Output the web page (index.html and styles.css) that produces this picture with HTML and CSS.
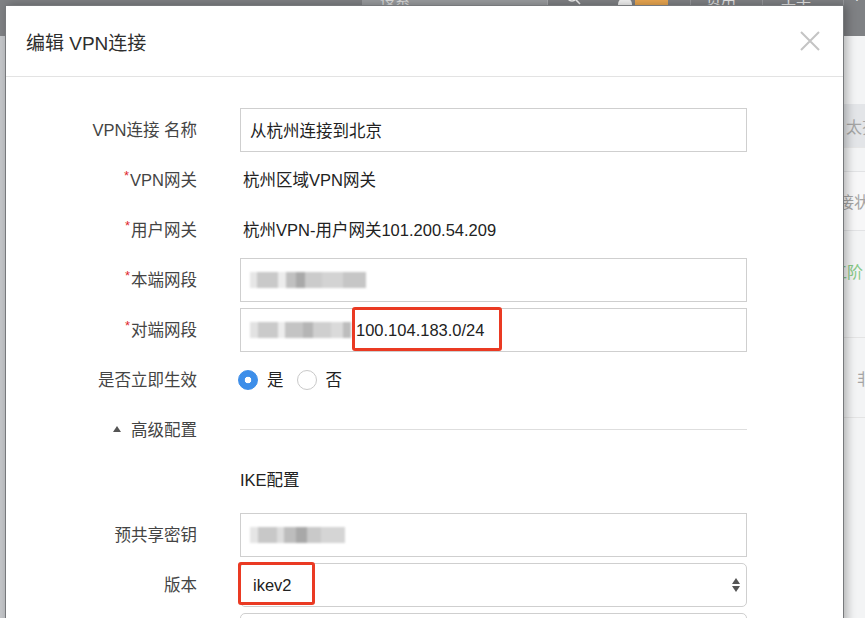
FILE: index.html
```html
<!DOCTYPE html>
<html lang="zh-CN">
<head>
<meta charset="utf-8">
<title>编辑 VPN连接</title>
<link rel="stylesheet" href="styles.css">
</head>
<body>
<div class="page">
  <div class="topbar">
    <div class="search"><span class="search-text">搜索</span></div>
    <div class="tb-icon">
      <svg width="16" height="16" viewBox="0 0 16 16"><circle cx="7" cy="7" r="5" fill="none" stroke="#eee" stroke-width="1.6"/><path d="M11 11l4 4" stroke="#eee" stroke-width="1.6"/></svg>
    </div>
    <div class="tb-user">
      <svg width="14" height="16" viewBox="0 0 14 16"><circle cx="7" cy="4" r="3.5" fill="#f2f2f2"/><path d="M0 16c0-5 3-7 7-7s7 2 7 7z" fill="#f2f2f2"/></svg>
      <span class="badge">32</span>
    </div>
    <div class="tb-link tb-sep">资用</div>
    <div class="tb-link tb-sep">工单</div>
    <div class="tb-link tb-sep tb-last">F</div>
  </div>
  <div class="layout">
    <div class="sidebar"></div>
    <div class="main">
      <div class="bg-row bg-head"><span class="bg-cell">太芬</span></div>
      <div class="bg-row bg-sub"><span class="bg-cell">接状</span></div>
      <div class="bg-row bg-item"><span class="bg-cell green">工阶</span></div>
      <div class="bg-row bg-item2"><span class="bg-cell">非</span></div>
    </div>
  </div>
</div>

<div class="modal">
  <div class="modal-header">
    <div class="modal-title">编辑 VPN连接</div>
    <svg class="close" width="20" height="20" viewBox="0 0 20 20"><path d="M1 1L19 19M19 1L1 19" stroke="#c4c4c4" stroke-width="2"/></svg>
  </div>
  <div class="form">
    <div class="row">
      <div class="label">VPN连接 名称</div>
      <div class="control"><div class="input">从杭州连接到北京</div></div>
    </div>
    <div class="row">
      <div class="label"><span class="req">*</span>VPN网关</div>
      <div class="control"><div class="value">杭州区域VPN网关</div></div>
    </div>
    <div class="row">
      <div class="label"><span class="req">*</span>用户网关</div>
      <div class="control"><div class="value">杭州VPN-用户网关101.200.54.209</div></div>
    </div>
    <div class="row">
      <div class="label"><span class="req">*</span>本端网段</div>
      <div class="control"><div class="input"><span class="blur blur-a"></span></div></div>
    </div>
    <div class="row">
      <div class="label"><span class="req">*</span>对端网段</div>
      <div class="control">
        <div class="input"><span class="blur blur-b"></span><span class="ip">100.104.183.0/24</span></div>
        <div class="mark mark-ip"></div>
      </div>
    </div>
    <div class="row">
      <div class="label">是否立即生效</div>
      <div class="control radios">
        <span class="radio checked"></span><span class="radio-text">是</span>
        <span class="radio"></span><span class="radio-text">否</span>
      </div>
    </div>
    <div class="row">
      <div class="label"><span class="caret"></span>高级配置</div>
      <div class="control"><div class="divider"></div></div>
    </div>
    <div class="row">
      <div class="label"></div>
      <div class="control"><div class="section">IKE配置</div></div>
    </div>
    <div class="row row-gap">
      <div class="label">预共享密钥</div>
      <div class="control"><div class="input"><span class="blur blur-c"></span></div></div>
    </div>
    <div class="row">
      <div class="label">版本</div>
      <div class="control">
        <div class="select"><span>ikev2</span>
          <svg width="8" height="14" viewBox="0 0 8 14"><path d="M4 0L8 6H0z" fill="#555"/><path d="M0 8H8L4 14z" fill="#555"/></svg>
        </div>
        <div class="mark mark-ver"></div>
      </div>
    </div>
    <div class="row">
      <div class="label"></div>
      <div class="control"><div class="select"></div></div>
    </div>
  </div>
</div>
</body>
</html>
```
FILE: styles.css
```css
* { box-sizing: border-box; }
html, body { margin: 0; padding: 0; }
body {
  width: 865px;
  height: 618px;
  overflow: hidden;
  position: relative;
  background: #f3f4f5;
  font-family: "Liberation Sans", "Noto Sans CJK SC", sans-serif;
  color: #333;
}

/* ---------- page behind the dialog ---------- */
.page { height: 618px; display: flex; flex-direction: column; }
.topbar {
  height: 36px;
  flex: none;
  background: #7f8184;
  display: flex;
  align-items: stretch;
}
.topbar > * { flex: none; }
.search {
  margin-left: 362px;
  width: 186px;
  background: #9a9c9f;
  border-right: 1px solid #a9abae;
  display: flex;
  align-items: flex-start;
}
.search-text {
  margin-top: -13px;
  padding-left: 18px;
  font-size: 15px;
  color: #dcdcdc;
}
.tb-icon { margin-left: 17px; margin-top: -11px; }
.tb-user { margin-left: 37px; margin-top: -11px; display: flex; align-items: flex-start; gap: 3px; }
.badge {
  background: #e9a650;
  color: #fff;
  font-size: 14px;
  width: 33px;
  text-align: center;
  height: 16px;
  line-height: 10px;
}
.tb-link {
  margin-left: 22px;
  padding-left: 15px;
  width: 72px;
  color: #e4e4e4;
  font-size: 15px;
  margin-top: -13px;
}
.tb-link + .tb-link { margin-left: 0; padding-left: 18px; width: 81px; }
.tb-link.tb-last { padding-left: 11px; width: 30px; }
.tb-sep { border-left: 1px solid #96989b; }

.layout { flex: 1; display: flex; }
.sidebar { width: 200px; background: #c4c6c9; flex: none; }
.main { flex: 1; padding-top: 68px; display: flex; flex-direction: column; }
.bg-row { display: flex; align-items: center; }
.bg-cell { margin-left: 647px; font-size: 16px; color: #a5a5a5; white-space: nowrap; }
.bg-head { height: 44px; background: #e3e5e8; border-bottom: 1px solid #e6e6e6; margin-bottom: 23px; }
.bg-head .bg-cell { margin-left: 646px; }
.bg-sub { height: 60px; background: #f7f7f8; border-top: 1px solid #e2e3e5; border-bottom: 1px solid #e2e3e5; }
.bg-sub .bg-cell { margin-left: 638px; }
.bg-item { height: 107px; align-items: flex-start; padding-top: 28px; border-bottom: 1px solid #e4e4e4; }
.bg-item .bg-cell { margin-left: 631px; }
.green { color: #86c987; }
.bg-item2 { height: 80px; border-bottom: 1px solid #e4e4e4; }
.bg-item2 .bg-cell { margin-left: 657px; }

/* ---------- dialog ---------- */
.modal {
  position: absolute;
  left: 5px;
  top: 5px;
  width: 839px;
  height: 700px;
  background: #fff;
  border: 1px solid #77797c;
  box-shadow: 3px 0 9px rgba(0, 0, 0, 0.28);
}
.modal-header {
  height: 71px;
  border-bottom: 1px solid #e3e3e3;
  display: flex;
  align-items: center;
  justify-content: space-between;
  padding: 0 23px 0 20px;
}
.modal-title { font-size: 19px; color: #2e2e2e; }
.close { display: block; }

.form { padding-top: 31px; display: flex; flex-direction: column; gap: 6px; }
.row { display: flex; align-items: center; height: 44px; }
.row-gap { margin-top: 5px; }
.label {
  width: 191px;
  flex: none;
  text-align: right;
  font-size: 16.5px;
  color: #444;
  display: flex;
  justify-content: flex-end;
  align-items: center;
  padding-bottom: 3px;
}
.req { color: #e0262b; font-size: 13px; align-self: flex-start; margin-top: 1px; margin-right: 1px; }
.control { margin-left: 43px; width: 507px; position: relative; font-size: 16.5px; }
.value { padding-left: 3px; color: #222; padding-bottom: 3px; }
.input {
  height: 44px;
  border: 1px solid #cfcfcf;
  padding-left: 9px;
  display: flex;
  align-items: center;
  color: #222;
}
.ip { margin-left: 5px; color: #222; }

.blur { display: inline-block; height: 16px; filter: blur(1.3px); }
.blur-a {
  width: 116px;
  background: linear-gradient(90deg,
    #e6e6e6 0 6%, #c9c9c9 6% 24%, #ececec 24% 31%, #c0c0c0 31% 40%,
    #a9a9a9 40% 47%, #cbcbcb 47% 62%, #d3d3d3 62% 80%, #c6c6c6 80% 100%);
}
.blur-b {
  width: 101px;
  background: linear-gradient(90deg,
    #e2e2e2 0 8%, #cacaca 8% 28%, #ededed 28% 35%, #c4c4c4 35% 52%,
    #b5b5b5 52% 62%, #cfcfcf 62% 80%, #dadada 80% 92%, #bdbdbd 92% 100%);
}
.blur-c {
  width: 95px;
  background: linear-gradient(90deg,
    #e5e5e5 0 8%, #c8c8c8 8% 28%, #dddddd 28% 36%, #bdbdbd 36% 48%,
    #a8a8a8 48% 60%, #c9c9c9 60% 75%, #d5d5d5 75% 100%);
}

.mark {
  position: absolute;
  border: 3px solid #ea3a23;
  border-radius: 3px;
}
.mark-ip { left: 112px; top: -1px; width: 150px; height: 44px; }
.mark-ver { left: -2px; top: -1px; width: 77px; height: 43px; }

.radios { display: flex; align-items: center; }
.radio {
  width: 20px;
  height: 20px;
  border-radius: 50%;
  border: 1px solid #c9c9c9;
  background: #fff;
  margin-left: -2px;
  flex: none;
}
.radio.checked {
  background: radial-gradient(circle, #fff 0 3px, #3d8ee9 3.6px);
  border-color: #3d8ee9;
}
.radio-text { margin-left: 9px; margin-right: 15px; color: #222; padding-bottom: 3px; }

.caret {
  width: 0;
  height: 0;
  border-left: 4.5px solid transparent;
  border-right: 4.5px solid transparent;
  border-bottom: 6px solid #555;
  margin-right: 10px;
}
.divider { height: 1px; background: #dedede; margin-top: -1px; }
.section { color: #222; padding-bottom: 3px; }

.select {
  height: 44px;
  border: 1px solid #cfcfcf;
  border-radius: 5px;
  display: flex;
  align-items: center;
  justify-content: space-between;
  padding: 0 6px 0 12px;
  color: #222;
}
.select svg { display: block; }
```
